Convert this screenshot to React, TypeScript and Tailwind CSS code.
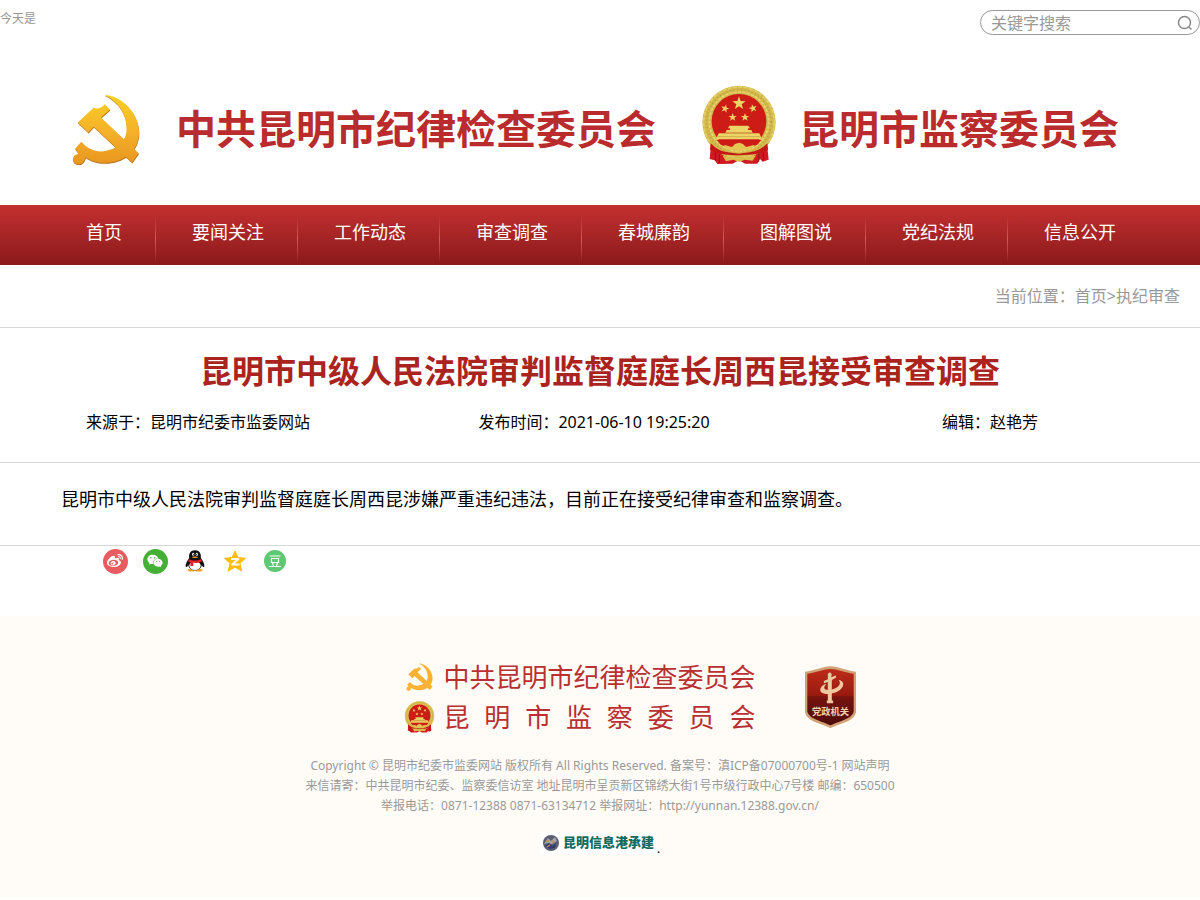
import React from "react";
import { FaWeibo, FaWeixin } from "react-icons/fa";

const navItems = ["首页", "要闻关注", "工作动态", "审查调查", "春城廉韵", "图解图说", "党纪法规", "信息公开"];

const STAR = "M0 -10 L2.4 -3.2 L9.5 -3.1 L3.8 1.2 L5.9 8.1 L0 4 L-5.9 8.1 L-3.8 1.2 L-9.5 -3.1 L-2.4 -3.2Z";

function PartyEmblem({ className, flat }: { className: string; flat?: boolean }) {
  const fill = flat ? "#f9b233" : "url(#partyGold)";
  const shapes = (
    <>
      <path d="M130 47 C184 50 234 104 234 160 C234 218 184 251 132 251 C106 251 88 244 74 234 C70 244 66 256 50 255 C34 253 32 236 41 229 C47 225 50 226 53 223 L42 209 L61 188 C82 212 106 219 128 216 C168 211 197 186 197 148 C197 104 172 68 130 47Z" />
      <path d="M50 130 L98 86 C110 92 124 84 131 75 L147 91 L120 115 L233 222 L213 250 L98 143 L82 160Z" />
    </>
  );
  return (
    <svg viewBox="33 45 204 212" className={className} aria-hidden="true">
      <defs>
        <linearGradient id="partyGold" gradientUnits="userSpaceOnUse" x1="0" y1="47" x2="0" y2="255">
          <stop offset="0" stopColor="#f9d023" />
          <stop offset="0.5" stopColor="#f5b32a" />
          <stop offset="1" stopColor="#e8961f" />
        </linearGradient>
      </defs>
      {!flat && (
        <g fill="#b8701c" transform="translate(1 3)">
          {shapes}
        </g>
      )}
      <g fill={fill}>{shapes}</g>
    </svg>
  );
}

function NationalEmblem({ className }: { className: string }) {
  return (
    <svg viewBox="188 28 226 240" className={className} aria-hidden="true">
      <path d="M218 196 L384 196 L390 252 L372 258 L364 250 L356 264 L320 264 L300 254 L282 264 L236 265 L228 254 L213 250Z" fill="#cf1a22" />
      <path d="M230 215 V255 M242 222 V262 M360 222 V258 M374 215 V252" stroke="#96101a" strokeWidth="3" />
      <circle cx="301" cy="140" r="110" fill="#d3b94c" />
      <circle cx="301" cy="140" r="106" fill="none" stroke="#e3cf66" strokeWidth="5" strokeDasharray="12 4" />
      <circle cx="301" cy="139" r="97" fill="none" stroke="#bb9a35" strokeWidth="4" strokeDasharray="3 8" />
      <circle cx="301" cy="138" r="89" fill="none" stroke="#e8d672" strokeWidth="5" strokeDasharray="9 4" />
      <circle cx="301" cy="137" r="82" fill="#cd1b16" />
      <g fill="#ecd467">
        <path d={STAR} transform="translate(301 83) scale(2.1)" />
        <path d={STAR} transform="translate(259 99) scale(1.3) rotate(15)" />
        <path d={STAR} transform="translate(343 98) scale(1.3) rotate(-15)" />
        <path d={STAR} transform="translate(282 125) scale(1.3)" />
        <path d={STAR} transform="translate(319 125) scale(1.3)" />
        <path d="M272 150 H329 L334 158 H268Z M274 158 H328 V163 H274Z M264 163 H338 L342 171 H260Z" />
        <path d="M240 173 H362 L370 191 H232Z" />
      </g>
      <path d="M262 172 H341 M236 183 H366" stroke="#c19b3a" strokeWidth="2" />
      <path d="M234 193 H368 L356 207 L326 218 H276 L246 207Z" fill="#cf1a18" />
      <path d="M256 207 L280 214 L289 205 L301 201 L313 205 L322 214 L348 207 L338 222 L318 222 L301 229 L284 222 L264 222Z" fill="#e3c553" />
      <path d="M216 202 C242 232 270 230 301 234 C332 230 362 230 386 202 L388 222 C360 240 330 236 301 239 C272 236 240 240 214 222Z" fill="#c41614" />
      <path d="M252 240 L282 246 L301 240 L320 246 L352 239 L342 255 L318 252 L301 259 L284 252 L262 257Z" fill="#dbbd4e" />
    </svg>
  );
}

function OrganBadge() {
  return (
    <svg viewBox="341 49 158 190" className="h-[63px] w-[53px]" role="img" aria-label="党政机关">
      <defs>
        <linearGradient id="badgeRed" x1="0" y1="0" x2="0" y2="1">
          <stop offset="0" stopColor="#bd2b1a" />
          <stop offset="0.48" stopColor="#98190f" />
          <stop offset="0.49" stopColor="#781310" />
          <stop offset="1" stopColor="#4c0d0a" />
        </linearGradient>
      </defs>
      <path d="M343 66 C370 64 398 50 420 50 C442 50 470 64 497 66 V188 C492 218 446 222 420 237 C394 222 348 218 343 188Z" fill="#d2a276" />
      <path d="M350 72 C376 69 400 58 420 58 C440 58 464 69 490 72 V186 C484 210 444 215 420 228 C396 215 356 210 350 186Z" fill="url(#badgeRed)" />
      <g fill="#edc8a0">
        <path d="M412 72 L418 68 L424 73 L422 83 L436 78 L437 84 L424 91 V153 H428 V161 H409 V153 H412 V97 L400 101 L400 94 L412 89Z" />
        <path d="M445 91 C466 94 463 119 432 130 C405 138 380 130 392 112 C396 106 403 104 408 103 C396 113 401 122 416 121 C438 119 456 105 445 91Z" />
      </g>
      <text x="420" y="197" textAnchor="middle" fontSize="28" fontWeight="700" fill="#f3d0ab">
        党政机关
      </text>
    </svg>
  );
}

function Penguin() {
  return (
    <svg viewBox="0 0 24 28" className="h-6 w-5" aria-hidden="true">
      <ellipse cx="7.5" cy="25" rx="4.500" ry="1.600" fill="#f3a62c" />
      <ellipse cx="16.5" cy="25" rx="4.500" ry="1.600" fill="#f3a62c" />
      <path d="M12 1 C6.500 1 4.500 5 5 10 C3 14 0 17 1 21 C2 22 3 20 4 19 C5 27 19 27 20 19 C21 20 22 22 23 21 C24 17 21 14 19 10 C19.500 5 17.500 1 12 1Z" fill="#111" />
      <ellipse cx="12" cy="19.500" rx="6.800" ry="5.200" fill="#fff" />
      <ellipse cx="9.800" cy="6" rx="1.300" ry="1.900" fill="#fff" />
      <ellipse cx="14.200" cy="6" rx="1.300" ry="1.900" fill="#fff" />
      <circle cx="10.100" cy="6.300" r="0.700" />
      <circle cx="13.900" cy="6.300" r="0.700" />
      <ellipse cx="12" cy="9.500" rx="3.600" ry="1" fill="#f3a62c" />
      <path d="M4.500 11.500 C9 14 15 14 19.500 11.500 L20 14.500 C16 16.500 13 16.500 10 16.200 V20 H6.500 V15.500 L4 14.500Z" fill="#e5222b" />
    </svg>
  );
}

const shareItems = [
  {
    label: "微博",
    icon: (
      <span className="flex size-[25px] items-center justify-center rounded-full bg-[#e85b5f] text-white">
        <FaWeibo className="size-4" />
      </span>
    )
  },
  {
    label: "微信",
    icon: (
      <span className="flex size-[25px] items-center justify-center rounded-full bg-[#45b035] text-white">
        <FaWeixin className="size-4" />
      </span>
    )
  },
  { label: "QQ", icon: <Penguin /> },
  {
    label: "QQ空间",
    icon: (
      <svg viewBox="0 0 24 24" className="size-6" aria-hidden="true">
        <path d="M12 2 L15 8.500 L22.500 9.300 L17 14.300 L18.700 22 L12 18.200 L5.300 22 L7 14.300 L1.500 9.300 L9 8.500Z" fill="#fdbe0f" stroke="#fdbe0f" strokeLinejoin="round" />
        <path d="M8 10 H15.500 L9 15.500 H16.500" fill="none" stroke="#fff" strokeWidth="1.800" strokeLinejoin="round" />
      </svg>
    )
  },
  {
    label: "豆瓣",
    icon: (
      <svg viewBox="0 0 22 22" className="size-[22px]" aria-hidden="true">
        <circle cx="11" cy="11" r="11" fill="#5ec874" />
        <path d="M5.500 6 H16.500 M7.500 8.500 H14.500 V12.500 H7.500Z M8.500 13 L9.500 16 M13.500 13 L12.500 16 M5 16.500 H17" fill="none" stroke="#fff" strokeWidth="1.200" />
      </svg>
    )
  }
];

export default function App() {
  return (
    <div className="bg-white font-['Noto_Sans','Noto_Sans_CJK_SC',sans-serif] text-base text-black">
      <div className="flex h-[45px] items-start justify-between pt-[10px]">
        <span className="text-xs leading-[18px] text-[#999]">今天是</span>
        <form className="flex h-[25px] w-[220px] items-center rounded-full border border-[#999] pr-[6px] pl-[10px]" onSubmit={(e) => e.preventDefault()}>
          <input
            type="search"
            aria-label="关键字搜索"
            placeholder="关键字搜索"
            className="h-full min-w-0 flex-1 bg-transparent text-base outline-none placeholder:text-[#999]"
          />
          <button type="submit" aria-label="搜索" className="text-[#888]">
            <svg viewBox="0 0 16 16" className="size-4" fill="none" stroke="currentColor" strokeWidth="1.500">
              <circle cx="7.500" cy="7.500" r="6" />
              <path d="M12 12 L14.500 14.500" />
            </svg>
          </button>
        </form>
      </div>

      <header className="mx-auto flex h-40 max-w-[1056px] items-center text-[40px] leading-none text-[#b92b2c]">
        <PartyEmblem className="mt-2 h-[71px] w-[68px] shrink-0" />
        <h1 className="mt-2 ml-9 font-bold whitespace-nowrap">中共昆明市纪律检查委员会</h1>
        <NationalEmblem className="mr-[22px] ml-auto h-20 w-[76px] shrink-0" />
        <h1 className="mt-2 mr-[9px] font-bold whitespace-nowrap">昆明市监察委员会</h1>
      </header>

      <nav className="h-[60px] bg-linear-to-b from-[#c53030] to-[#8b1a1b]">
        <ul className="flex justify-center text-lg leading-[54px] text-white">
          {navItems.map((item, idx) => (
            <li key={item} className="flex">
              <a href="#" className="pr-[33px] pl-9 whitespace-nowrap">
                {item}
              </a>
              <span
                className={
                  idx < navItems.length - 1
                    ? "mt-[10px] h-12 w-px bg-linear-to-b from-transparent via-[#d65a5a] to-transparent"
                    : "w-px"
                }
              />
            </li>
          ))}
        </ul>
      </nav>

      <main>
        <div className="border-b border-[#d8d8d8] px-5 text-right leading-[62px] text-[#999]">
          当前位置：<a href="#">首页</a>&gt;<a href="#">执纪审查</a>
        </div>

        <div className="border-b border-[#d8d8d8] pt-5 pb-[22px]">
          <h2 className="text-center text-[32px] leading-[46px] font-bold text-[#ab231e]">
            昆明市中级人民法院审判监督庭庭长周西昆接受审查调查
          </h2>
          <div className="flex pt-[10px] pr-3 text-center leading-9">
            <span className="flex-1">来源于：昆明市纪委市监委网站</span>
            <span className="flex-1">发布时间：2021-06-10 19:25:20</span>
            <span className="flex-1">编辑：赵艳芳</span>
          </div>
        </div>

        <article className="border-b border-[#d8d8d8] px-[25px] pt-[18px] pb-7">
          <p className="indent-9 text-lg leading-9">
            昆明市中级人民法院审判监督庭庭长周西昆涉嫌严重违纪违法，目前正在接受纪律审查和监察调查。
          </p>
        </article>

        <div className="flex h-[70px] items-start pl-[95px]">
          {shareItems.map((item) => (
            <a key={item.label} href="#" aria-label={item.label} className="flex h-[30px] w-10 items-center justify-center">
              {item.icon}
            </a>
          ))}
        </div>
      </main>

      <footer className="bg-[#fffcf7] pt-[41px] pb-[41px] text-center">
        <div className="flex justify-center gap-12 pl-[61px]">
          <div className="flex flex-col text-[26px] leading-10 text-[#b92f32]">
            <div className="flex items-center gap-2">
              <span className="flex w-[31px] justify-center">
                <PartyEmblem flat className="h-7 w-[29px]" />
              </span>
              <span className="whitespace-nowrap">中共昆明市纪律检查委员会</span>
            </div>
            <div className="flex items-center gap-2">
              <NationalEmblem className="h-8 w-[31px]" />
              <span className="flex flex-1 justify-between">
                {Array.from("昆明市监察委员会").map((char, idx) => (
                  <span key={idx}>{char}</span>
                ))}
              </span>
            </div>
          </div>
          <a href="#" className="flex items-center">
            <OrganBadge />
          </a>
        </div>

        <div className="mt-[19px] text-xs leading-5 text-[#999]">
          <p>Copyright © 昆明市纪委市监委网站 版权所有 All Rights Reserved. 备案号：滇ICP备07000700号-1 网站声明</p>
          <p>来信请寄：中共昆明市纪委、监察委信访室 地址昆明市呈贡新区锦绣大街1号市级行政中心7号楼 邮编：650500</p>
          <p>举报电话：0871-12388 0871-63134712 举报网址：http://yunnan.12388.gov.cn/</p>
        </div>

        <div className="mt-4 flex items-start justify-center text-xs text-black">
          <a href="#" className="flex h-[22px] items-center gap-1 bg-white px-[3px] text-[13px] font-black text-[#126b60]">
            <svg viewBox="0 0 16 16" className="size-4" aria-hidden="true">
              <circle cx="8" cy="8" r="8" fill="#5b5d70" />
              <path d="M1 9 L5 3 L8 6 L12 2 L14 6 L9 9 L5 8Z" fill="#a4a3b1" />
              <path d="M2 11 L6 8 L9 11 L13 8 L12 13 L7 14Z" fill="#333e68" />
              <path d="M4 12 L7 10 M9 5 L11 8 M3 6 L6 6" stroke="#bd8d58" strokeWidth="1.500" />
            </svg>
            昆明信息港承建
          </a>
          <span className="pt-[10px] leading-[14px]">.</span>
        </div>
      </footer>
    </div>
  );
}
